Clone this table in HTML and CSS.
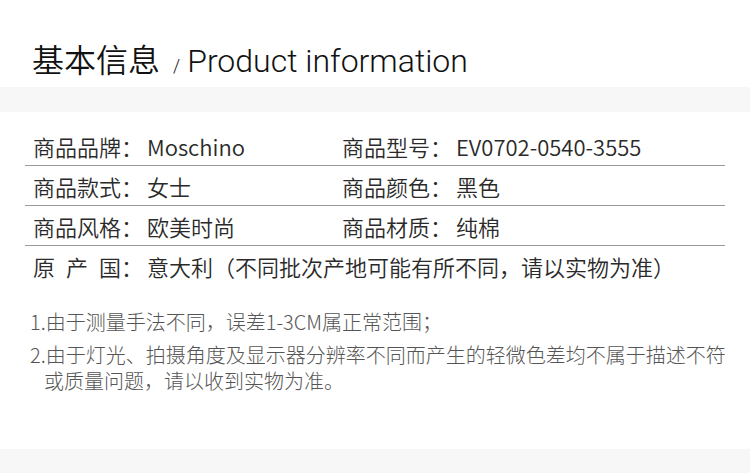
FILE: index.html
```html
<!DOCTYPE html>
<html lang="zh-CN">
<head>
<meta charset="utf-8">
<link rel="stylesheet" href="styles.css">
</head>
<body>
<div class="page">
  <header class="head">
    <h1 class="title-cn">基本信息</h1>
    <span class="slash">/</span>
    <span class="title-en">Product information</span>
  </header>
  <div class="band"></div>
  <section class="info">
    <div class="row">
      <div class="cell"><span class="label">商品品牌</span><span class="colon">：</span><span class="value latin">Moschino</span></div>
      <div class="cell"><span class="label">商品型号</span><span class="colon">：</span><span class="value latin">EV0702-0540-3555</span></div>
    </div>
    <div class="row">
      <div class="cell"><span class="label">商品款式</span><span class="colon">：</span><span class="value">女士</span></div>
      <div class="cell"><span class="label">商品颜色</span><span class="colon">：</span><span class="value">黑色</span></div>
    </div>
    <div class="row">
      <div class="cell"><span class="label">商品风格</span><span class="colon">：</span><span class="value">欧美时尚</span></div>
      <div class="cell"><span class="label">商品材质</span><span class="colon">：</span><span class="value">纯棉</span></div>
    </div>
    <div class="row last">
      <div class="cell wide"><span class="label spread">原 产 国</span><span class="colon">：</span><span class="value">意大利（不同批次产地可能有所不同，请以实物为准）</span></div>
    </div>
  </section>
  <section class="notes">
    <p class="note">1.由于测量手法不同，误差1-3CM属正常范围；</p>
    <p class="note">2.由于灯光、拍摄角度及显示器分辨率不同而产生的轻微色差均不属于描述不符或质量问题，请以收到实物为准。</p>
  </section>
  <div class="band bottom"></div>
</div>
</body>
</html>
```

FILE: styles.css
```css
html, body {
  margin: 0;
  padding: 0;
  background: #ffffff;
}

.page {
  width: 750px;
  height: 473px;
  display: flex;
  flex-direction: column;
  font-family: "Noto Sans CJK SC", "Noto Sans", sans-serif;
}

.head {
  height: 87px;
  box-sizing: border-box;
  padding: 38px 0 0 32px;
  display: flex;
  align-items: baseline;
  color: #111;
}

.title-cn {
  margin: 0;
  font-size: 32px;
  font-weight: 350;
  line-height: 40px;
}

.slash {
  font-family: Roboto, "Noto Sans", sans-serif;
  font-weight: 300;
  font-size: 18px;
  margin: 0 7px 0 13px;
}

.title-en {
  font-family: Roboto, "Noto Sans", sans-serif;
  font-weight: 300;
  font-size: 32px;
  letter-spacing: 0;
}

.band {
  height: 25px;
  background: #f7f7f7;
  flex: none;
}

.band.bottom {
  height: 24px;
  margin-top: auto;
}

.info {
  margin: 14px 25px 0;
}

.row {
  display: grid;
  grid-template-columns: 309px 1fr;
  height: 39px;
  border-bottom: 1px solid #9a9a9a;
  padding-left: 8px;
  align-items: center;
}

.row.last {
  border-bottom: none;
}

.cell {
  display: flex;
  align-items: center;
  font-size: 22px;
  font-weight: 350;
  line-height: 30px;
  color: #2a2a2a;
  white-space: nowrap;
}

.cell.wide {
  grid-column: 1 / 3;
}

.label {
  display: inline-block;
  width: 88px;
}

.label.spread {
  text-align: justify;
  text-align-last: justify;
}

.colon {
  display: inline-block;
  width: 22px;
}

.value {
  margin-left: 4px;
}

.notes {
  padding: 24px 0 0 30px;
}

.note {
  margin: 0 0 7px;
  font-size: 20px;
  font-weight: 300;
  line-height: 26px;
  color: #555;
  padding-left: 14px;
  text-indent: -14px;
  width: 700px;
}
```
